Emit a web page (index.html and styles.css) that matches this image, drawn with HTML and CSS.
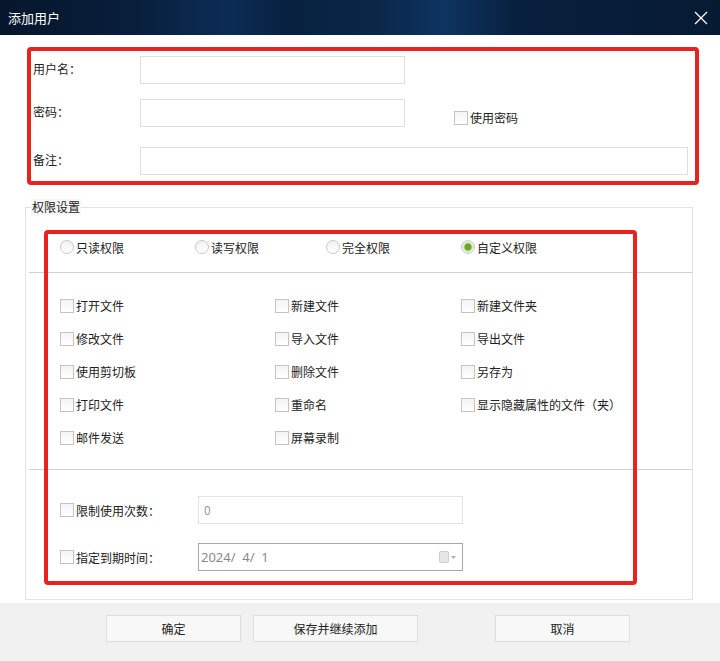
FILE: index.html
```html
<!DOCTYPE html>
<html lang="zh-CN">
<head>
    <meta charset="UTF-8">
    <meta name="viewport" content="width=device-width, initial-scale=1.0">
    <title>添加用户</title>
    <link rel="stylesheet" href="styles.css">
</head>
<body>
    <div class="dialog">
        <div class="titlebar">
            <span class="title">添加用户</span>
            <svg class="close-icon" width="14" height="14" viewBox="0 0 14 14">
                <line x1="1" y1="1" x2="13" y2="13" stroke="#ffffff" stroke-width="1.2"></line>
                <line x1="13" y1="1" x2="1" y2="13" stroke="#ffffff" stroke-width="1.2"></line>
            </svg>
        </div>

        <div class="mark basic">
            <div class="field-row first">
                <span class="field-label">用户名：</span>
                <div class="text-input short"></div>
            </div>
            <div class="field-row second">
                <span class="field-label">密码：</span>
                <div class="text-input short"></div>
                <label class="check pwd-check"><span class="box"></span>使用密码</label>
            </div>
            <div class="field-row third">
                <span class="field-label">备注：</span>
                <div class="text-input long"></div>
            </div>
        </div>

        <div class="perm-wrap">
            <fieldset class="perm">
                <legend>权限设置</legend>
                <div class="radio-row">
                    <label class="radio"><span class="dot"></span>只读权限</label>
                    <label class="radio"><span class="dot"></span>读写权限</label>
                    <label class="radio"><span class="dot"></span>完全权限</label>
                    <label class="radio"><span class="dot on"></span>自定义权限</label>
                </div>
                <div class="divider"></div>
                <div class="check-grid">
                    <label class="check"><span class="box"></span>打开文件</label>
                    <label class="check"><span class="box"></span>新建文件</label>
                    <label class="check"><span class="box"></span>新建文件夹</label>
                    <label class="check"><span class="box"></span>修改文件</label>
                    <label class="check"><span class="box"></span>导入文件</label>
                    <label class="check"><span class="box"></span>导出文件</label>
                    <label class="check"><span class="box"></span>使用剪切板</label>
                    <label class="check"><span class="box"></span>删除文件</label>
                    <label class="check"><span class="box"></span>另存为</label>
                    <label class="check"><span class="box"></span>打印文件</label>
                    <label class="check"><span class="box"></span>重命名</label>
                    <label class="check"><span class="box"></span>显示隐藏属性的文件（夹）</label>
                    <label class="check"><span class="box"></span>邮件发送</label>
                    <label class="check"><span class="box"></span>屏幕录制</label>
                </div>
                <div class="divider"></div>
                <div class="limits">
                    <div class="limit-row">
                        <label class="check limit-label"><span class="box"></span>限制使用次数：</label>
                        <div class="text-input limit-input">0</div>
                    </div>
                    <div class="limit-row">
                        <label class="check limit-label"><span class="box"></span>指定到期时间：</label>
                        <div class="date-input">
                            <span class="date-text">2024/  4/  1</span>
                            <span class="date-btn">
                                <svg width="18" height="14" viewBox="0 0 18 14">
                                    <rect x="0.5" y="1.5" width="9" height="11" rx="1" fill="#e6e6e6" stroke="#cfcfcf"></rect>
                                    <polygon points="12,6 17,6 14.5,9" fill="#b0b0b0"></polygon>
                                </svg>
                            </span>
                        </div>
                    </div>
                </div>
            </fieldset>
            <div class="mark overlay"></div>
        </div>

        <div class="footer">
            <button class="btn ok">确定</button>
            <button class="btn save">保存并继续添加</button>
            <button class="btn cancel">取消</button>
        </div>
    </div>
</body>
</html>
```

FILE: styles.css
```css
body {
    margin: 0;
    padding: 0;
    background-color: #ffffff;
    font-family: "Noto Sans CJK SC", "Microsoft YaHei", sans-serif;
    font-size: 12px;
    color: #222222;
    overflow: hidden;
}
.dialog {
    width: 720px;
    height: 661px;
    display: flex;
    flex-direction: column;
    background-color: #ffffff;
}
.titlebar {
    height: 35px;
    flex: none;
    display: flex;
    align-items: center;
    justify-content: space-between;
    padding: 0 12px 0 8px;
    box-sizing: border-box;
    background: linear-gradient(90deg, #06162c 0%, #081e3b 18%, #0c2c55 32%, #07203f 40%, #0a2748 52%, #0d3461 62%, #081f3d 72%, #061a33 100%);
}
.title {
    color: #ffffff;
    font-size: 13px;
}
.close-icon {
    display: block;
}

/* red annotation boxes */
.mark {
    border: 4px solid #e8231e;
    border-radius: 4px;
    box-sizing: border-box;
}
.basic {
    margin: 12px 21px 0 27px;
    height: 138px;
    padding: 5px 0 0 2px;
    flex: none;
}
.field-row {
    display: flex;
    align-items: center;
    height: 28px;
}
.field-row.second {
    margin-top: 15px;
}
.field-row.third {
    margin-top: 20px;
}
.field-label {
    width: 107px;
    padding-bottom: 3px;
    flex: none;
}
.text-input {
    height: 28px;
    box-sizing: border-box;
    border: 1px solid #dedede;
    background-color: #ffffff;
}
.text-input.short {
    width: 265px;
}
.text-input.long {
    width: 548px;
}
.pwd-check {
    align-self: flex-end;
    margin-left: 49px;
    margin-bottom: 1px;
}

/* checkbox and radio */
.check, .radio {
    display: flex;
    align-items: center;
    gap: 2px;
    white-space: nowrap;
}
.box {
    width: 14px;
    height: 14px;
    box-sizing: border-box;
    border: 1px solid #c4c4c4;
    background: linear-gradient(#f4f4f4, #ffffff);
    flex: none;
}
.dot {
    width: 14px;
    height: 14px;
    box-sizing: border-box;
    border: 1px solid #c8c8c8;
    border-radius: 50%;
    background: linear-gradient(#f2f2f2, #ffffff);
    flex: none;
}
.dot.on {
    background: radial-gradient(circle, #6aa62a 0, #6aa62a 3px, #c9e2ac 4px, #f4f8ee 6px);
}

/* permissions */
.perm-wrap {
    position: relative;
    margin: 14px 0 0 25px;
    width: 668px;
    flex: none;
}
.perm {
    margin: 0;
    padding: 0 0 28px 0;
    border: 1px solid #e2e2e2;
    min-width: 0;
}
.perm legend {
    margin-left: 5px;
    padding: 0 1px;
    line-height: 16px;
    background-color: #f6f6f6;
}
.radio-row {
    display: grid;
    grid-template-columns: 135px 131px 135px auto;
    height: 24px;
    align-items: center;
    margin-top: 20px;
    padding-left: 34px;
}
.divider {
    height: 1px;
    background-color: #d2d2d2;
    margin: 13px 0 0 3px;
}
.check-grid {
    display: grid;
    grid-template-columns: 215px 186px auto;
    grid-auto-rows: 33px;
    align-items: center;
    padding: 16px 0 0 34px;
}
.check-grid + .divider {
    margin-top: 15px;
}
.limits {
    display: flex;
    flex-direction: column;
    gap: 19px;
    padding: 26px 0 0 34px;
}
.limit-row {
    display: flex;
    align-items: center;
    height: 28px;
}
.limit-label {
    width: 138px;
}
.limit-input {
    width: 265px;
    border-color: #e2e2e2;
    color: #9a9a9a;
    padding-left: 5px;
    line-height: 26px;
}
.date-input {
    width: 265px;
    height: 28px;
    box-sizing: border-box;
    border: 1px solid #a8a8a8;
    display: flex;
    align-items: center;
    justify-content: space-between;
    padding: 0 5px 0 2px;
    color: #8a8a8a;
    font-family: "Noto Sans", sans-serif;
    font-size: 13px;
}
.date-text {
    white-space: pre;
}
.date-btn svg {
    display: block;
}
.overlay {
    position: absolute;
    left: 19px;
    top: 31px;
    width: 593px;
    height: 355px;
    pointer-events: none;
}

/* footer */
.footer {
    margin-top: 3px;
    flex: 1;
    background-color: #f1f1f1;
    display: flex;
    align-items: flex-start;
    padding: 12px 0 0 106px;
    box-sizing: border-box;
}
.btn {
    height: 27px;
    border: 1px solid #dddddd;
    background-color: #f8f8f8;
    font-family: inherit;
    font-size: 12px;
    color: #222222;
    padding: 0;
    cursor: pointer;
}
.btn.ok {
    width: 135px;
}
.btn.save {
    width: 165px;
    margin-left: 12px;
}
.btn.cancel {
    width: 135px;
    margin-left: 77px;
}
```
